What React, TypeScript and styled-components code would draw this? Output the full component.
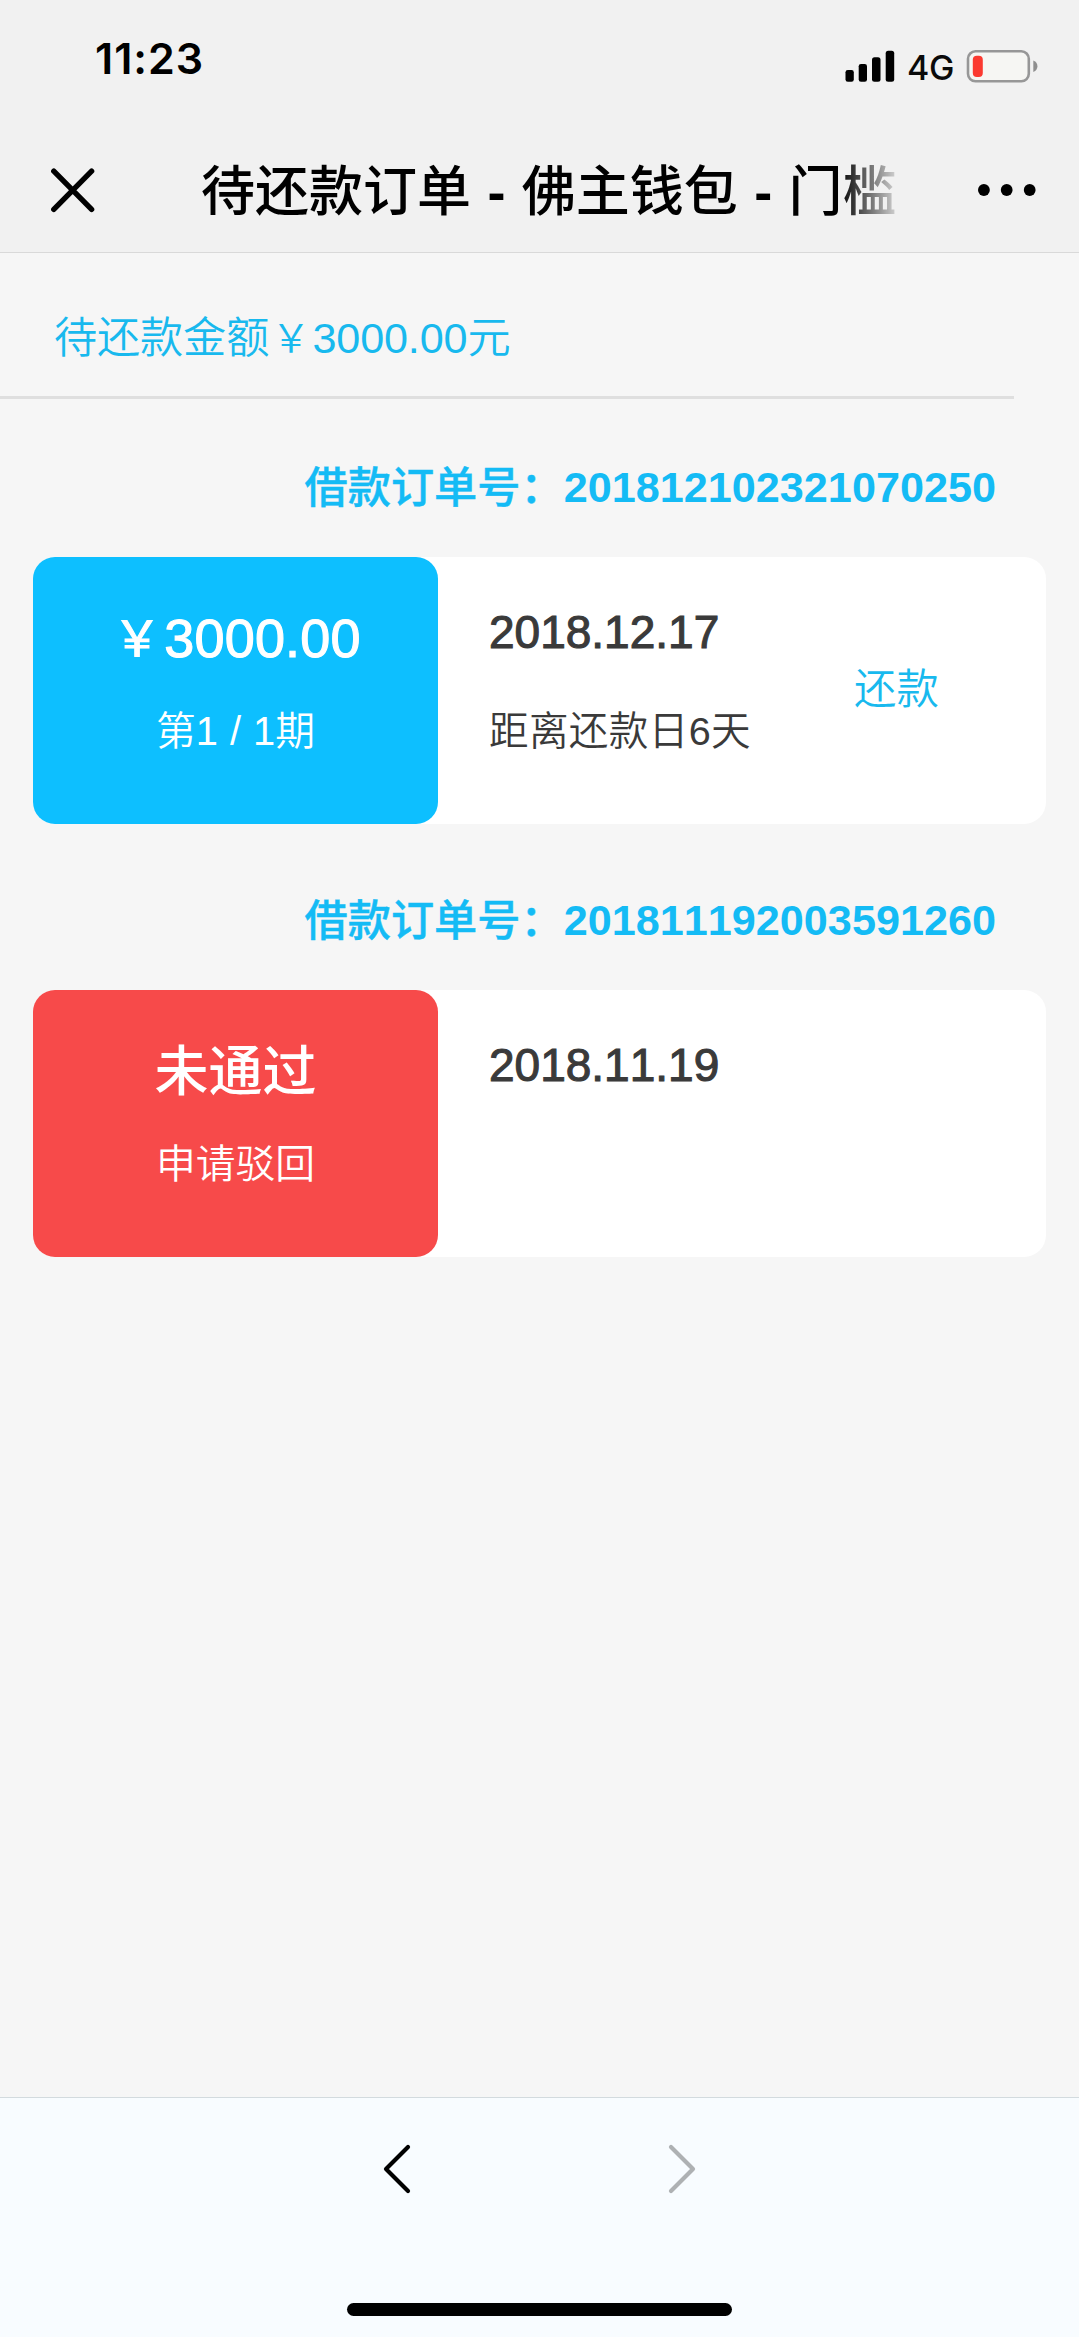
import React from "react";
import styled, { createGlobalStyle } from "styled-components";

const sans = `"Liberation Sans", Arial, "Noto Sans CJK SC", sans-serif`;

const GlobalStyle = createGlobalStyle`
  * { box-sizing: border-box; }
  body { margin: 0; background: #f6f6f6; }
`;

const Screen = styled.div`
  width: 1079px;
  height: 2337px;
  display: flex;
  flex-direction: column;
  overflow: hidden;
  background: #f6f6f6;
  font-family: ${sans};
  font-kerning: none;
`;

const Header = styled.header`
  height: 253px;
  display: flex;
  flex-direction: column;
  background: #f1f1f1;
  border-bottom: 1px solid #d9d9d9;
`;

const StatusBar = styled.div`
  height: 128px;
  padding: 0 41px 0 95px;
  display: flex;
  justify-content: space-between;
`;

const Clock = styled.time`
  padding-top: 31px;
  font: 600 43px/54px Inter, sans-serif;
  font-kerning: normal;
  letter-spacing: 1px;
  color: #000;
`;

const StatusIcons = styled.div`
  height: 36px;
  margin-top: 48px;
  display: flex;
  align-items: center;
`;

const Network = styled.span`
  width: 46px;
  margin: 3px 13px 0 12px;
  font: 500 34px/36px Inter, sans-serif;
  letter-spacing: -0.2px;
  white-space: nowrap;
  color: #0a0a0a;
`;

const NavBar = styled.nav`
  height: 124px;
  padding: 0 42px 0 50px;
  display: flex;
  align-items: center;
`;

const IconButton = styled.button`
  padding: 0;
  border: 0;
  background: none;
  display: flex;
`;

const Title = styled.h1`
  width: 697px;
  margin: 0 79px 0 105px;
  padding-top: 3px;
  overflow: hidden;
  white-space: nowrap;
  font: 500 54px/80px "Liberation Sans", "Noto Sans CJK SC", sans-serif;
  word-spacing: 1.4px;
  color: #000;
  mask-image: linear-gradient(to right, #000 638px, transparent 704px);
`;

const Dash = styled.span`
  font-weight: 700;
`;

const Content = styled.main`
  flex: 1;
`;

const YenSign = styled.span`
  display: inline-block;
  width: 1.111em;
  line-height: 1;
  text-align: center;
  vertical-align: 0.025em;
  font-size: 0.9em;
`;

const Total = styled.div`
  width: 1014px;
  height: 146px;
  padding: 53px 0 0 54px;
  border-bottom: 3px solid #dfdfdf;
  font-size: 43.2px;
  line-height: 64px;
  letter-spacing: -0.15px;
  font-weight: 350;
  white-space: nowrap;
  color: #18b9ee;
`;

const Order = styled.section`
  height: 433px;
  padding: 56px 33px 0;
`;

const OrderNumber = styled.h2`
  height: 64px;
  margin: 0 50px 38px 0;
  display: flex;
  justify-content: flex-end;
  font-size: 43.2px;
  line-height: 64px;
  font-weight: 700;
  white-space: nowrap;
  color: #14bbf5;
`;

const OrderLabel = styled.span`
  padding-top: 1px;
  font-weight: 500;
  -webkit-text-stroke: 0.4px #14bbf5;
`;

const Card = styled.article`
  height: 267px;
  display: flex;
  border-radius: 22px;
  background: #fff;
`;

const Badge = styled.div<{ $color: string }>`
  width: 405px;
  padding-top: 40px;
  border-radius: 22px;
  text-align: center;
  color: #fff;
  background: ${(p) => p.$color};
`;

const BadgeTitle = styled.div<{ $numeric: boolean }>`
  height: 82px;
  padding-top: ${(p) => (p.$numeric ? 1 : 2)}px;
  font-size: 54px;
  line-height: 80px;
  font-weight: ${(p) => (p.$numeric ? 400 : 500)};
  letter-spacing: ${(p) => (p.$numeric ? 0.2 : 0)}px;
  -webkit-text-stroke: ${(p) => (p.$numeric ? 1.1 : 0)}px #fff;
`;

const BadgeNote = styled.div`
  margin-top: 22px;
  font-size: 39.8px;
  line-height: 60px;
  font-weight: 350;
  word-spacing: 1px;
`;

const Details = styled.div`
  width: 300px;
  padding: 42px 0 0 51px;
  color: #3a3a3a;
  white-space: nowrap;
`;

const DateText = styled.div`
  height: 66px;
  font-size: 46px;
  line-height: 66px;
  -webkit-text-stroke: 1.1px #3a3a3a;
`;

const DueText = styled.div`
  margin-top: 36px;
  font-size: 39.6px;
  line-height: 60px;
  letter-spacing: 0.35px;
  font-weight: 350;
`;

const Repay = styled.a`
  padding: 101px 0 0 116px;
  font-size: 42.4px;
  line-height: 64px;
  font-weight: 350;
  color: #18b9ee;
`;

const Toolbar = styled.footer`
  height: 240px;
  display: flex;
  flex-direction: column;
  align-items: center;
  border-top: 1px solid #d3dbde;
  background: #f8fcff;
`;

const PageButtons = styled.div`
  height: 205px;
  padding-top: 45px;
  display: flex;
  gap: 255px;
  align-items: flex-start;
`;

const HomeBar = styled.div`
  width: 385px;
  height: 13px;
  border-radius: 7px;
  background: #000;
`;

type OrderData = {
  id: string;
  color: string;
  amount?: string;
  status?: string;
  note: string;
  date: string;
  due?: string;
  action?: string;
};

const orders: OrderData[] = [
  {
    id: "201812102321070250",
    color: "#0dbfff",
    amount: "3000.00",
    note: "第1 / 1期",
    date: "2018.12.17",
    due: "距离还款日6天",
    action: "还款",
  },
  {
    id: "201811192003591260",
    color: "#f74a4a",
    status: "未通过",
    note: "申请驳回",
    date: "2018.11.19",
  },
];

const Signal = () => (
  <svg width="50" height="32" viewBox="0 0 50 32">
    <rect x="0.5" y="20" width="8.3" height="11.7" rx="2.3" />
    <rect x="13.7" y="14" width="8.3" height="17.7" rx="2.3" />
    <rect x="27" y="7.3" width="8.5" height="24.4" rx="2.5" />
    <rect x="40.7" y="0.7" width="8.5" height="31" rx="2.5" />
  </svg>
);

const Battery = () => (
  <svg width="72" height="34" viewBox="0 0 72 34">
    <rect x="2" y="2.3" width="60.8" height="30" rx="7.5" fill="#f6f6f3" stroke="#979797" strokeWidth="2.6" />
    <rect x="6.8" y="6.7" width="10" height="21.3" rx="4" fill="#fb3a30" />
    <path d="M67.3 11.5 C72.8 13.5 72.8 21 67.3 23z" fill="#8e8e8e" />
  </svg>
);

const Close = () => (
  <svg width="46" height="46" viewBox="0 0 46 46" stroke="#000" strokeWidth="5.4" strokeLinecap="round">
    <path d="M3.8 4.2L41.6 42.4M41.6 4.2L3.8 42.4" />
  </svg>
);

const More = () => (
  <svg width="60" height="14" viewBox="0 0 60 14">
    <circle cx="6.9" cy="7" r="5.9" />
    <circle cx="29.7" cy="7" r="5.9" />
    <circle cx="52.7" cy="7" r="5.9" />
  </svg>
);

const Chevron = ({ forward = false }: { forward?: boolean }) => (
  <svg
    width="30"
    height="52"
    viewBox="0 0 30 52"
    fill="none"
    stroke={forward ? "#aeb1b3" : "#000"}
    strokeWidth="4.2"
    strokeLinecap="round"
    strokeLinejoin="round"
  >
    <path d={forward ? "M4 4L26 26L4 48" : "M26 4L4 26L26 48"} />
  </svg>
);

export default function App() {
  return (
    <>
      <GlobalStyle />
      <Screen>
        <Header>
          <StatusBar>
            <Clock>11:23</Clock>
            <StatusIcons>
              <Signal />
              <Network>4G</Network>
              <Battery />
            </StatusIcons>
          </StatusBar>
          <NavBar>
            <IconButton aria-label="关闭">
              <Close />
            </IconButton>
            <Title>
              待还款订单 <Dash>-</Dash> 佛主钱包 <Dash>-</Dash> 门槛
            </Title>
            <IconButton aria-label="更多">
              <More />
            </IconButton>
          </NavBar>
        </Header>
        <Content>
          <Total>
            待还款金额<YenSign>￥</YenSign>3000.00元
          </Total>
          {orders.map((o) => (
            <Order key={o.id}>
              <OrderNumber>
                <OrderLabel>借款订单号：</OrderLabel>
                {o.id}
              </OrderNumber>
              <Card>
                <Badge $color={o.color}>
                  <BadgeTitle $numeric={!!o.amount}>
                    {o.amount && <YenSign>￥</YenSign>}
                    {o.amount ?? o.status}
                  </BadgeTitle>
                  <BadgeNote>{o.note}</BadgeNote>
                </Badge>
                <Details>
                  <DateText>{o.date}</DateText>
                  {o.due && <DueText>{o.due}</DueText>}
                </Details>
                {o.action && <Repay>{o.action}</Repay>}
              </Card>
            </Order>
          ))}
        </Content>
        <Toolbar>
          <PageButtons>
            <IconButton aria-label="后退">
              <Chevron />
            </IconButton>
            <IconButton aria-label="前进">
              <Chevron forward />
            </IconButton>
          </PageButtons>
          <HomeBar />
        </Toolbar>
      </Screen>
    </>
  );
}
